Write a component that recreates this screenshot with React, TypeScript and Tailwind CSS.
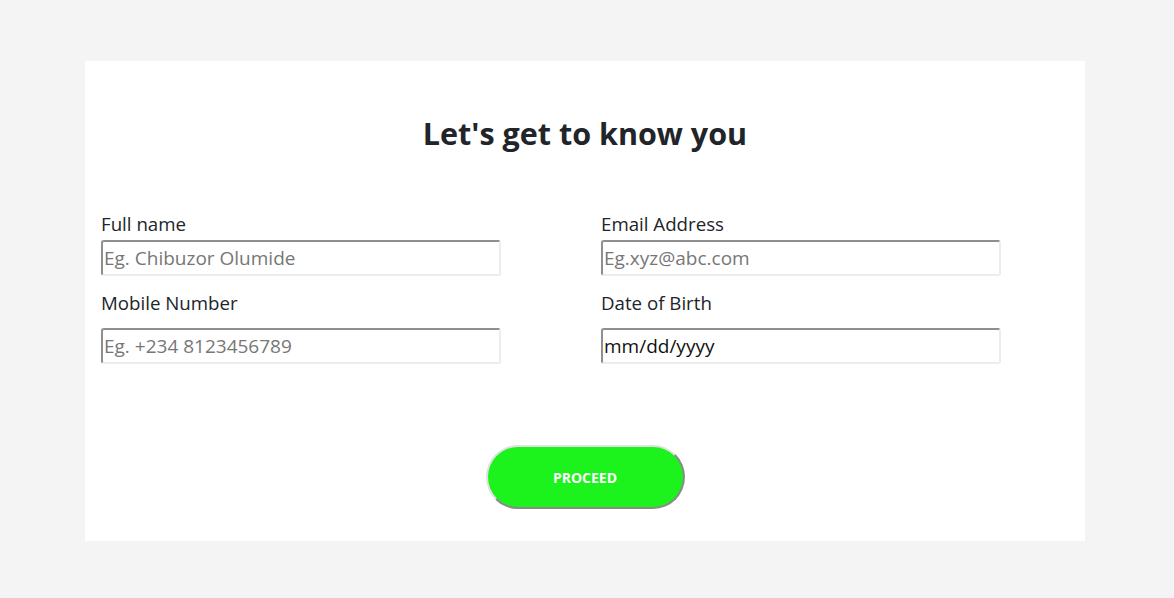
import React from 'react';

const inputCls =
  'w-[400px] h-[36px] px-[1px] text-[19px] text-[#111] placeholder:text-[#777] bg-white rounded-[3px] border-2 border-t-[#8f8f8f] border-l-[#8f8f8f] border-b-[#ececec] border-r-[#ececec] outline-none';

const App = () => {
  return (
    <div className="min-h-[598px] w-full bg-[#f4f4f4] pt-[61px] font-['Open_Sans',sans-serif] text-[#212529]">
      <div className="ml-[85px] w-[1000px] h-[480px] bg-white px-[16px] flex flex-col">
        {/* Heading */}
        <h1 className="mt-[52px] text-center text-[30.5px] leading-[40px] font-bold text-[#212529]">
          Let's get to know you
        </h1>

        {/* Form */}
        <div className="mt-[59px] grid grid-cols-[400px_400px] gap-x-[100px]">
          <div className="flex flex-col">
            <label className="text-[18.7px] leading-[24px]">Full name</label>
            <input className={`mt-[4px] ${inputCls}`} placeholder="Eg. Chibuzor Olumide" />
          </div>
          <div className="flex flex-col">
            <label className="text-[18.7px] leading-[24px]">Email Address</label>
            <input className={`mt-[4px] ${inputCls}`} placeholder="Eg.xyz@abc.com" />
          </div>
          <div className="flex flex-col mt-[15px]">
            <label className="text-[18.7px] leading-[24px]">Mobile Number</label>
            <input className={`mt-[13px] ${inputCls}`} placeholder="Eg. +234 8123456789" />
          </div>
          <div className="flex flex-col mt-[15px]">
            <label className="text-[18.7px] leading-[24px]">Date of Birth</label>
            <div className={`mt-[13px] flex items-center ${inputCls}`}>mm/dd/yyyy</div>
          </div>
        </div>

        {/* Button */}
        <div className="mt-[81px] flex justify-center">
          <button className="w-[199px] h-[64px] rounded-full bg-[#1cf21c] text-white text-[14px] font-bold border-2 border-t-[#e0e0e0] border-l-[#e0e0e0] border-b-[#8a8a8a] border-r-[#8a8a8a]">
            PROCEED
          </button>
        </div>
      </div>
    </div>
  );
};

export default App;
